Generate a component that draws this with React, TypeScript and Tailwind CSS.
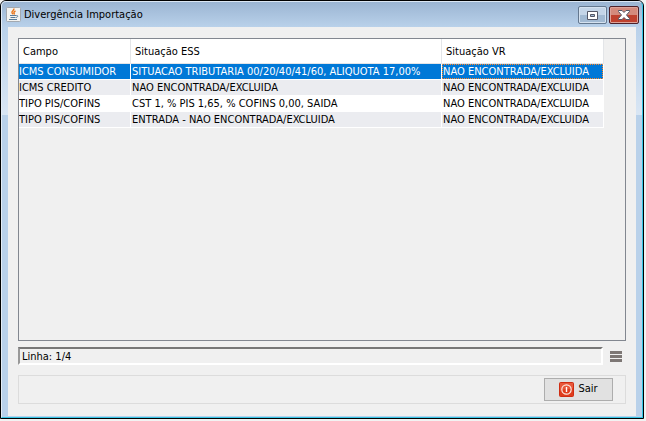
import { useState } from "react";
import { clsx } from "clsx";

interface Divergencia {
  campo: string;
  ess: string;
  vr: string;
}

const COLUNAS = ["Campo", "Situação ESS", "Situação VR"];

const DIVERGENCIAS: Divergencia[] = [
  {
    campo: "ICMS CONSUMIDOR",
    ess: "SITUACAO TRIBUTARIA 00/20/40/41/60, ALIQUOTA 17,00%",
    vr: "NAO ENCONTRADA/EXCLUIDA",
  },
  { campo: "ICMS CREDITO", ess: "NAO ENCONTRADA/EXCLUIDA", vr: "NAO ENCONTRADA/EXCLUIDA" },
  { campo: "TIPO PIS/COFINS", ess: "CST 1, % PIS 1,65, % COFINS 0,00, SAIDA", vr: "NAO ENCONTRADA/EXCLUIDA" },
  { campo: "TIPO PIS/COFINS", ess: "ENTRADA - NAO ENCONTRADA/EXCLUIDA", vr: "NAO ENCONTRADA/EXCLUIDA" },
];

function JavaIcon() {
  return (
    <svg width="15" height="15" viewBox="0 0 15 15" fill="none" className="shrink-0">
      <rect x="0.5" y="0.5" width="14" height="14" rx="1" fill="#f3f3f1" stroke="#a3a9b0" />
      <path d="M7.800 1.500c.8 1.800-2.600 2.500-1.800 4.200.2.600.8 1 .9 1.600M9.500 4C8 4.700 7.500 5.300 8.200 6.300c.3.500 0 .8-.4 1.100" stroke="#e8761c" strokeWidth="1.400" />
      <path d="M4 8.500h6M4.500 10.500h5M3 12.500h8M10.300 8.500c2.200-.3 1.800 1.600-.3 2" stroke="#587b98" strokeWidth="1" />
    </svg>
  );
}

function SairIcon() {
  return (
    <svg width="15" height="15" viewBox="0 0 15 15" fill="none">
      <rect x="0.5" y="0.5" width="14" height="14" rx="1" fill="#df3c1c" stroke="#cf2c12" />
      <path d="M1 1h13v5C10 8 5 6 1 9z" fill="#e8583a" />
      <circle cx="7.500" cy="7.500" r="4.700" stroke="#fde9e2" strokeWidth="1.200" />
      <path d="M7.500 5v5" stroke="#fff" strokeWidth="1.400" />
    </svg>
  );
}

function TitleBar() {
  return (
    <header className="flex h-[25px] items-start pr-[3px] pl-1">
      <div className="flex items-center gap-[3px] pt-[5px]">
        <JavaIcon />
        <h1 className="leading-[15px]">Divergência Importação</h1>
      </div>
      <div className="ml-auto flex gap-[2px] pt-1">
        <button
          type="button"
          aria-label="Maximizar"
          className="flex h-[18px] w-[29px] items-center justify-center rounded-[2px] border border-[#64788f] bg-linear-to-b from-[#c4d5e8] from-50% to-[#a2bad3] to-50% inset-ring inset-ring-[#d5e2f0]"
        >
          <svg width="11" height="9" viewBox="0 0 11 9">
            <path fillRule="evenodd" d="M.5.5h10v8H.5zM3.500 3.500v2h4v-2z" fill="#fff" stroke="#535666" />
          </svg>
        </button>
        <button
          type="button"
          aria-label="Fechar"
          className="flex h-[18px] w-[30px] items-center justify-center rounded-[2px] border border-[#4d2029] bg-linear-to-b from-[#d48a7c] from-50% to-[#bf412e] to-50% inset-ring inset-ring-[#dda399]"
        >
          <svg width="12" height="10" viewBox="0 0 12 10">
            <path d="M.5.5h3.500L6 2.500 8 .5h3.500v1L8.500 5l3 3.500v1H8L6 7.500 4 9.500H.5v-1l3-3.500-3-3.500z" fill="#fff" stroke="#535666" />
          </svg>
        </button>
      </div>
    </header>
  );
}

export default function App() {
  const [linha, setLinha] = useState(0);

  return (
    <div className="flex h-screen flex-col bg-[#f2f2f2] pr-[2px] pb-[2px] font-['DejaVu_Sans_Condensed','Liberation_Sans',sans-serif] text-[11px] text-black">
      <div className="flex min-h-0 flex-1 flex-col rounded-t-[6px] border border-black bg-[#b9d1ea] bg-linear-to-b from-[#9ab4d2] to-[#b9d1ea] to-[26px]">
        <div className="flex min-h-0 flex-1 flex-col rounded-t-[5px] border border-t-[#dbe7f4] border-r-[#35c5e5] border-b-[#35c5e5] border-l-[#e4edf6]">
          <TitleBar />
          <div className="flex min-h-0 flex-1 bg-linear-to-b from-[#b9d1ea] to-[#d9e6f4] bg-size-[100%_88px] bg-no-repeat px-[6px] pb-px">
            <main className="flex min-w-0 flex-1 flex-col bg-[#f0f0f0] px-[10px] pt-[11px] pb-3">
              <div className="min-h-0 flex-1 overflow-auto border border-[#828790]">
                <table className="w-[585px] table-fixed border-separate border-spacing-0 text-left">
                  <colgroup>
                    <col className="w-28" />
                    <col className="w-[311px]" />
                    <col />
                  </colgroup>
                  <thead>
                    <tr>
                      {COLUNAS.map((coluna) => (
                        <th key={coluna} className="h-[25px] border-r border-b border-[#e3e5e8] bg-white p-0 pt-[2px] pl-1 font-normal">
                          {coluna}
                        </th>
                      ))}
                    </tr>
                  </thead>
                  <tbody>
                    {DIVERGENCIAS.map((item, i) => (
                      <tr
                        key={i}
                        onClick={() => setLinha(i)}
                        className={clsx(
                          "leading-[15px] whitespace-nowrap",
                          i === linha ? "bg-[#0078d7] text-white" : i % 2 ? "bg-[#ebecf0]" : "bg-white"
                        )}
                      >
                        <td className="border-r border-b border-white p-0">{item.campo}</td>
                        <td className="border-r border-b border-white p-0 pl-px">{item.ess}</td>
                        <td className="border-r border-b border-white p-0">
                          <div
                            className={clsx(
                              "border border-dotted leading-[13px]",
                              i === linha ? "border-[#ff8728]" : "border-transparent"
                            )}
                          >
                            {item.vr}
                          </div>
                        </td>
                      </tr>
                    ))}
                  </tbody>
                </table>
              </div>

              {/* Status */}
              <div className="mt-[6px] flex items-center gap-[7px] pr-1">
                <p className="h-[18px] flex-1 border-2 border-t-[#777] border-r-white border-b-white border-l-[#999] pl-[2px] leading-[15px]">
                  Linha: {linha + 1}/{DIVERGENCIAS.length}
                </p>
                <button type="button" aria-label="Menu" className="flex flex-col gap-px">
                  <span className="h-[3px] w-3 bg-[#7d7775]" />
                  <span className="h-[3px] w-3 bg-[#7d7775]" />
                  <span className="h-[3px] w-3 bg-[#7d7775]" />
                </button>
              </div>

              <footer className="mt-[10px] flex h-[29px] items-center justify-end border border-[#dcdcdc] pr-3">
                <button
                  type="button"
                  className="flex h-[23px] w-[69px] items-center justify-center gap-1 border border-[#adadad] bg-[#e1e1e1]"
                >
                  <SairIcon />
                  Sair
                </button>
              </footer>
            </main>
          </div>
        </div>
      </div>
    </div>
  );
}
